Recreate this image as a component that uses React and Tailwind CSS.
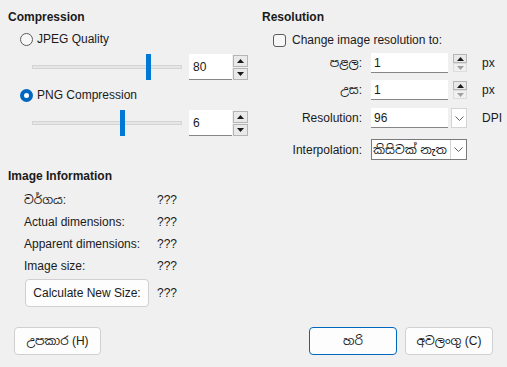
import React from "react";

const FONT = { fontFamily: '"Liberation Sans", "Noto Sans Sinhala", "Noto Sans", sans-serif' };

const Arrow = ({ up, faint }) => (
  <svg width="7" height="4" viewBox="0 0 7 4">
    <path d={up ? "M0 4 L3.5 0 L7 4 Z" : "M0 0 L3.5 4 L7 0 Z"} fill={faint ? "#a0a0a0" : "#1a1a1a"} />
  </svg>
);

const Radio = ({ checked, label }) => (
  <div className="flex items-center h-4 pl-3 gap-[4px]">
    {checked ? (
      <div className="w-[13px] h-[13px] rounded-full bg-[#0067c0] flex items-center justify-center">
        <div className="w-[5px] h-[5px] rounded-full bg-white"></div>
      </div>
    ) : (
      <div className="w-[13px] h-[13px] rounded-full border border-[#5c5c5c] bg-[#f7f7f7]"></div>
    )}
    <span>{label}</span>
  </div>
);

const SliderSpin = ({ value, pos }) => (
  <div className="flex items-center h-[26px]">
    <div className="relative w-[150px] ml-6 h-[26px] flex items-center">
      <div className="w-full h-[4px] bg-[#e5e5e5] border border-[#d4d4d4]"></div>
      <div className="absolute top-0 w-[5px] h-[26px] bg-[#0078d4]" style={{ left: pos }}></div>
    </div>
    <div className="ml-[7px] w-[43px] h-[26px] bg-white border-b border-[#868686] flex items-center pl-[4px]">
      {value}
    </div>
    <div className="ml-px flex flex-col gap-px">
      <div className="w-[15px] h-[12px] bg-[#e9e9e9] border border-[#b5b5b5] flex items-center justify-center">
        <Arrow up />
      </div>
      <div className="w-[15px] h-[12px] bg-[#e9e9e9] border border-[#b5b5b5] flex items-center justify-center">
        <Arrow />
      </div>
    </div>
  </div>
);

const PxSpin = ({ value }) => (
  <div className="flex items-center h-5">
    <div className="w-[77px] h-5 bg-white border-b border-[#868686] flex items-center pl-[3px]">{value}</div>
    <div className="ml-[5px] flex flex-col">
      <div className="w-[14px] h-[9px] bg-[#e9e9e9] border border-[#b5b5b5] flex items-center justify-center">
        <Arrow up />
      </div>
      <div className="w-[14px] h-[9px] bg-[#f0f0f0] border border-[#dcdcdc] flex items-center justify-center">
        <Arrow faint />
      </div>
    </div>
  </div>
);

const Chevron = () => (
  <svg width="9" height="5" viewBox="0 0 9 5">
    <path d="M0.5 0.5 L4.5 4.5 L8.5 0.5" fill="none" stroke="#606060" strokeWidth="1" />
  </svg>
);

const InfoRow = ({ label }) => (
  <div className="flex items-center h-[22px] pl-4">
    <span className="w-[133px]">{label}</span>
    <span>???</span>
  </div>
);

const Button = ({ children, className, primary }) => (
  <div
    className={
      "h-[28px] flex items-center justify-center rounded-[4px] bg-[#fdfdfd] border " +
      (primary ? "border-[#0067c0] " : "border-[#d0d0d0] ") +
      (className || "")
    }
  >
    {children}
  </div>
);

export default function App() {
  return (
    <div className="w-[507px] h-[367px] bg-[#f0f0f0] text-[12px] text-[#1a1a1a] leading-4" style={FONT}>
      <div className="flex pt-[9px]">
        {/* left column */}
        <div className="w-[254px] pl-2 flex flex-col">
          <div className="font-bold h-4">Compression</div>
          <div className="mt-[6px]">
            <Radio label="JPEG Quality" />
          </div>
          <div className="mt-[7px]">
            <SliderSpin value="80" pos={114} />
          </div>
          <div className="mt-[7px]">
            <Radio checked label="PNG Compression" />
          </div>
          <div className="mt-[7px]">
            <SliderSpin value="6" pos={88} />
          </div>

          <div className="font-bold h-4 mt-[32px]">Image Information</div>
          <div className="mt-[5px]">
            <InfoRow label="වර්ගය:" />
            <InfoRow label="Actual dimensions:" />
            <InfoRow label="Apparent dimensions:" />
            <InfoRow label="Image size:" />
          </div>
          <div className="flex items-center mt-[2px] pl-[17px]">
            <Button className="w-[124px] h-[27px]">Calculate New Size:</Button>
            <span className="ml-[8px]">???</span>
          </div>
        </div>

        {/* right column */}
        <div className="flex-1 pl-2 flex flex-col">
          <div className="font-bold h-4">Resolution</div>
          <div className="mt-[7px] flex items-center h-4 pl-[11px] gap-[6px]">
            <div className="w-[13px] h-[13px] rounded-[3px] border border-[#5c5c5c] bg-[#f7f7f7]"></div>
            <span>Change image resolution to:</span>
          </div>
          <div className="mt-[5px] grid grid-cols-[100px_96px_auto] gap-x-[9px] items-center">
            <span className="text-right">පළල:</span>
            <PxSpin value="1" />
            <span className="pl-[6px]">px</span>

            <span className="text-right mt-[7px]">උස:</span>
            <div className="mt-[7px]">
              <PxSpin value="1" />
            </div>
            <span className="pl-[6px] mt-[7px]">px</span>

            <span className="text-right mt-[8px]">Resolution:</span>
            <div className="mt-[8px] flex items-center h-5">
              <div className="w-[77px] h-5 bg-white border-b border-[#868686] flex items-center pl-[3px]">96</div>
              <div className="ml-[3px] w-[16px] h-5 bg-white border border-[#d4d4d4] flex items-center justify-center">
                <Chevron />
              </div>
            </div>
            <span className="pl-[6px] mt-[8px]">DPI</span>

            <span className="text-right mt-[11px]">Interpolation:</span>
            <div className="mt-[11px] flex items-center h-[21px] border border-[#7a7a7a] bg-white">
              <div className="flex-1 pl-px whitespace-nowrap overflow-hidden">කිසිවක් නැත</div>
              <div className="w-[16px] h-[19px] border-l border-[#d4d4d4] flex items-center justify-center">
                <Chevron />
              </div>
            </div>
            <span></span>
          </div>
        </div>
      </div>

      {/* bottom buttons */}
      <div className="flex items-center mt-[20px] px-[14px]">
        <Button className="w-[87px]">උපකාර (H)</Button>
        <div className="flex-1"></div>
        <Button primary className="w-[88px]">හරි</Button>
        <Button className="w-[88px] ml-[8px]">අවලංගු (C)</Button>
      </div>
    </div>
  );
}
